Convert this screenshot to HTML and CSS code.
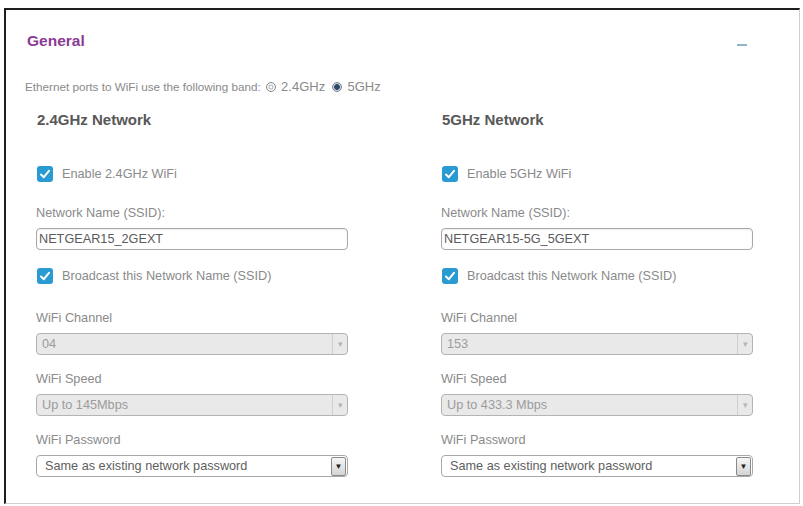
FILE: index.html
```html
<!DOCTYPE html>
<html lang="en">
<head>
    <meta charset="UTF-8">
    <meta name="viewport" content="width=device-width, initial-scale=1.0">
    <title>WiFi Settings</title>
    <link rel="stylesheet" href="styles.css">
</head>
<body>
    <div class="panel">
        <div class="panel-head">
            <h2>General</h2>
            <span class="collapse"></span>
        </div>

        <p class="band">
            Ethernet ports to WiFi use the following band:
            <span class="radio"></span><span class="band-opt">2.4GHz</span>
            <span class="radio on"></span><span class="band-opt">5GHz</span>
        </p>

        <div class="columns">
            <div class="column">
                <h3>2.4GHz Network</h3>

                <div class="check first">
                    <span class="box"><svg width="16" height="16" viewBox="0 0 16 16"><path d="M4 8.5 L6.8 11.2 L12 4.8" fill="none" stroke="#fff" stroke-width="2" stroke-linecap="round" stroke-linejoin="round"/></svg></span>
                    <span>Enable 2.4GHz WiFi</span>
                </div>

                <div class="field ssid">
                    <label for="ssid-24">Network Name (SSID):</label>
                    <input type="text" id="ssid-24" value="NETGEAR15_2GEXT">
                </div>

                <div class="check broadcast">
                    <span class="box"><svg width="16" height="16" viewBox="0 0 16 16"><path d="M4 8.5 L6.8 11.2 L12 4.8" fill="none" stroke="#fff" stroke-width="2" stroke-linecap="round" stroke-linejoin="round"/></svg></span>
                    <span>Broadcast this Network Name (SSID)</span>
                </div>

                <div class="field channel">
                    <label>WiFi Channel</label>
                    <div class="select disabled"><span class="value">04</span><span class="arrow">&#9662;</span></div>
                </div>

                <div class="field">
                    <label>WiFi Speed</label>
                    <div class="select disabled"><span class="value">Up to 145Mbps</span><span class="arrow">&#9662;</span></div>
                </div>

                <div class="field">
                    <label>WiFi Password</label>
                    <div class="select"><span class="value">Same as existing network password</span><span class="arrow">&#9660;</span></div>
                </div>
            </div>

            <div class="column">
                <h3>5GHz Network</h3>

                <div class="check first">
                    <span class="box"><svg width="16" height="16" viewBox="0 0 16 16"><path d="M4 8.5 L6.8 11.2 L12 4.8" fill="none" stroke="#fff" stroke-width="2" stroke-linecap="round" stroke-linejoin="round"/></svg></span>
                    <span>Enable 5GHz WiFi</span>
                </div>

                <div class="field ssid">
                    <label for="ssid-5">Network Name (SSID):</label>
                    <input type="text" id="ssid-5" value="NETGEAR15-5G_5GEXT">
                </div>

                <div class="check broadcast">
                    <span class="box"><svg width="16" height="16" viewBox="0 0 16 16"><path d="M4 8.5 L6.8 11.2 L12 4.8" fill="none" stroke="#fff" stroke-width="2" stroke-linecap="round" stroke-linejoin="round"/></svg></span>
                    <span>Broadcast this Network Name (SSID)</span>
                </div>

                <div class="field channel">
                    <label>WiFi Channel</label>
                    <div class="select disabled"><span class="value">153</span><span class="arrow">&#9662;</span></div>
                </div>

                <div class="field">
                    <label>WiFi Speed</label>
                    <div class="select disabled"><span class="value">Up to 433.3 Mbps</span><span class="arrow">&#9662;</span></div>
                </div>

                <div class="field">
                    <label>WiFi Password</label>
                    <div class="select"><span class="value">Same as existing network password</span><span class="arrow">&#9660;</span></div>
                </div>
            </div>
        </div>
    </div>
</body>
</html>
```

FILE: styles.css
```css
body {
    font-family: "Liberation Sans", Arial, sans-serif;
    background-color: #ffffff;
    margin: 0;
    padding: 0;
}

.panel {
    margin: 8px 0 0 4px;
    width: 796px;
    box-sizing: border-box;
    padding: 22px 0 26px 0;
    border-top: 2px solid #1e1e1e;
    border-left: 2px solid #1e1e1e;
    border-right: 1px solid #cfcfcf;
    border-bottom: 1px solid #cfcfcf;
}

.panel-head {
    display: flex;
    justify-content: space-between;
    padding: 0 52px 0 21px;
}

.panel-head h2 {
    margin: 0;
    font-size: 15.5px;
    line-height: 18px;
    font-weight: bold;
    color: #8b3a95;
}

.collapse {
    display: block;
    width: 10px;
    height: 2px;
    margin-top: 12px;
    background-color: #8db7c5;
}

.band {
    margin: 30px 0 0 0;
    padding-left: 19px;
    font-size: 11.7px;
    line-height: 14px;
    color: #8a8a8a;
}

.band-opt {
    font-size: 13px;
}

.radio {
    display: inline-block;
    width: 10px;
    height: 10px;
    box-sizing: border-box;
    border-radius: 50%;
    border: 1px solid #8a8a8a;
    box-shadow: inset 0 0 0 1.5px #fff, inset 0 0 0 2.5px #b5b5b5;
    vertical-align: -1px;
    margin: 0 5px 0 2px;
}

.radio.on {
    margin-left: 4px;
    border-color: #7c8794;
    box-shadow: none;
    background: radial-gradient(circle, #2e4a66 0 2.5px, #c9d4de 3.2px);
}

.columns {
    display: grid;
    grid-template-columns: 312px 312px;
    column-gap: 93px;
    padding-left: 30px;
    margin-top: 17px;
}

.column h3 {
    margin: 0 0 0 1px;
    font-size: 15px;
    line-height: 18px;
    font-weight: bold;
    color: #585858;
}

.check {
    display: flex;
    align-items: center;
    gap: 9px;
    height: 16px;
    padding-left: 1px;
    font-size: 12.7px;
    line-height: 16px;
    color: #8a8a8a;
}

.check.first {
    margin-top: 37px;
}

.check.broadcast {
    margin-top: 18px;
}

.box {
    display: block;
    width: 16px;
    height: 16px;
    border-radius: 3px;
    background-color: #2a9ad3;
}

.box svg {
    display: block;
}

.field {
    margin-top: 17px;
}

.field.ssid {
    margin-top: 24px;
}

.field.channel {
    margin-top: 27px;
}

label {
    display: block;
    font-size: 12.7px;
    line-height: 15px;
    color: #8a8a8a;
    margin-bottom: 7px;
}

input {
    display: block;
    width: 100%;
    height: 22px;
    box-sizing: border-box;
    padding: 0 2px;
    border: 1px solid #a8a8a8;
    border-radius: 4px;
    box-shadow: inset 0 1px 2px rgba(0, 0, 0, 0.08);
    font-family: "Liberation Sans", Arial, sans-serif;
    font-size: 12.7px;
    color: #5a5a5a;
}

.select {
    display: flex;
    align-items: center;
    height: 22px;
    box-sizing: border-box;
    border: 1px solid #a8a8a8;
    border-radius: 4px;
    background-color: #ffffff;
    font-size: 12.7px;
    color: #606060;
}

.select .value {
    flex: 1;
    padding-left: 8px;
}

.select .arrow {
    display: flex;
    align-items: center;
    justify-content: center;
    width: 13px;
    height: 17px;
    margin-right: 1px;
    border: 1px solid #8a8a8a;
    border-radius: 2px;
    background: linear-gradient(#f6f6f6, #d4d4d4);
    font-size: 8px;
    color: #222;
}

.select.disabled {
    background-color: #e9e9e9;
    border-color: #b4b4b4;
    color: #9c9c9c;
}

.select.disabled .value {
    padding-left: 5px;
}

.select.disabled .arrow {
    width: 14px;
    height: 20px;
    margin-right: 0;
    border: none;
    border-left: 1px solid #cfcfcf;
    border-radius: 0;
    background: none;
    font-size: 9px;
    color: #b5b5b5;
}
```
